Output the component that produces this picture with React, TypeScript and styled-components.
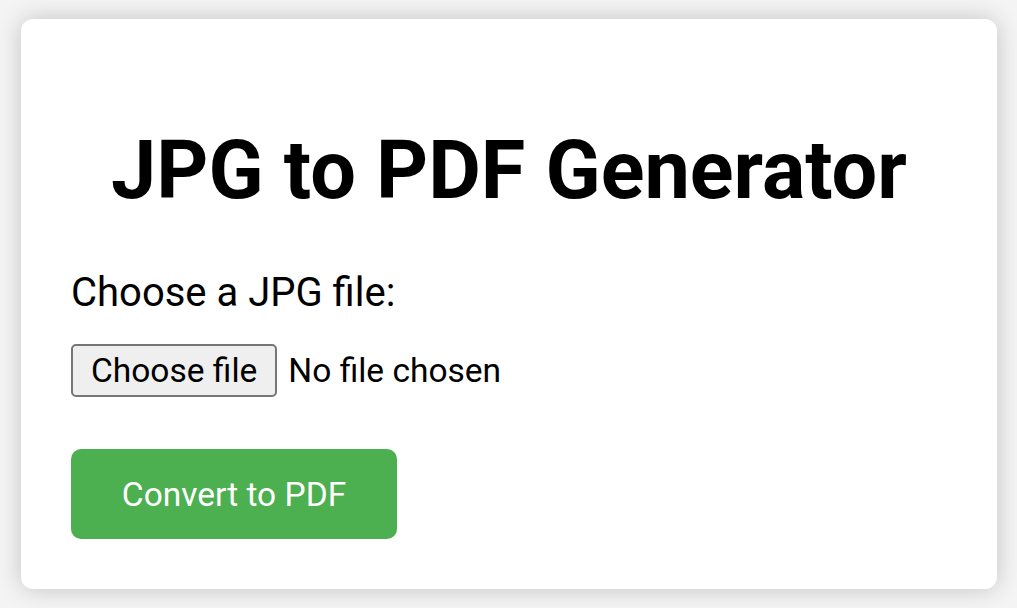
import React from "react";
import styled, { createGlobalStyle } from "styled-components";

const Global = createGlobalStyle`
  html, body { margin: 0; padding: 0; }
  body {
    background: #f4f4f4;
    font-family: Roboto, "Liberation Sans", Arial, sans-serif;
    width: 1017px;
    height: 608px;
    overflow: hidden;
  }
`;

const Page = styled.div`
  box-sizing: border-box;
  width: 1017px;
  height: 608px;
  padding: 19px 20px 19px 21px;
  display: flex;
`;

const Card = styled.div`
  flex: 1;
  box-sizing: border-box;
  background: #ffffff;
  border-radius: 12px;
  box-shadow: 0 0 25px rgba(0, 0, 0, 0.2);
  padding: 50px 50px;
  display: flex;
  flex-direction: column;
  align-items: flex-start;
  & > * { flex-shrink: 0; }
`;

const Title = styled.h1`
  align-self: stretch;
  margin: 61px 0 0;
  text-align: center;
  font-size: 81px;
  font-weight: 700;
  line-height: 1;
  color: #000;
`;

const Label = styled.label`
  margin-top: 58px;
  font-size: 40px;
  line-height: 48px;
  color: #000;
`;

const FileRow = styled.div`
  margin-top: 27px;
  display: flex;
  align-items: center;
  gap: 11px;
`;

const FileButton = styled.button`
  box-sizing: border-box;
  height: 53px;
  padding: 0 18px;
  background: #efefef;
  border: 2px solid #767676;
  border-radius: 5px;
  font-family: inherit;
  font-size: 33.5px;
  color: #000;
`;

const FileStatus = styled.span`
  font-size: 33.5px;
  color: #000;
`;

const ConvertButton = styled.button`
  margin-top: 52px;
  box-sizing: border-box;
  width: 326px;
  height: 90px;
  border: none;
  border-radius: 10px;
  background: #4caf50;
  color: #fff;
  font-family: inherit;
  font-size: 33.5px;
`;

export default function App() {
  return (
    <>
      <Global />
      <Page>
        <Card>
          <Title>JPG to PDF Generator</Title>
          <Label htmlFor="file">Choose a JPG file:</Label>
          <FileRow>
            <FileButton type="button">Choose file</FileButton>
            <FileStatus>No file chosen</FileStatus>
          </FileRow>
          <ConvertButton type="button">Convert to PDF</ConvertButton>
        </Card>
      </Page>
    </>
  );
}
